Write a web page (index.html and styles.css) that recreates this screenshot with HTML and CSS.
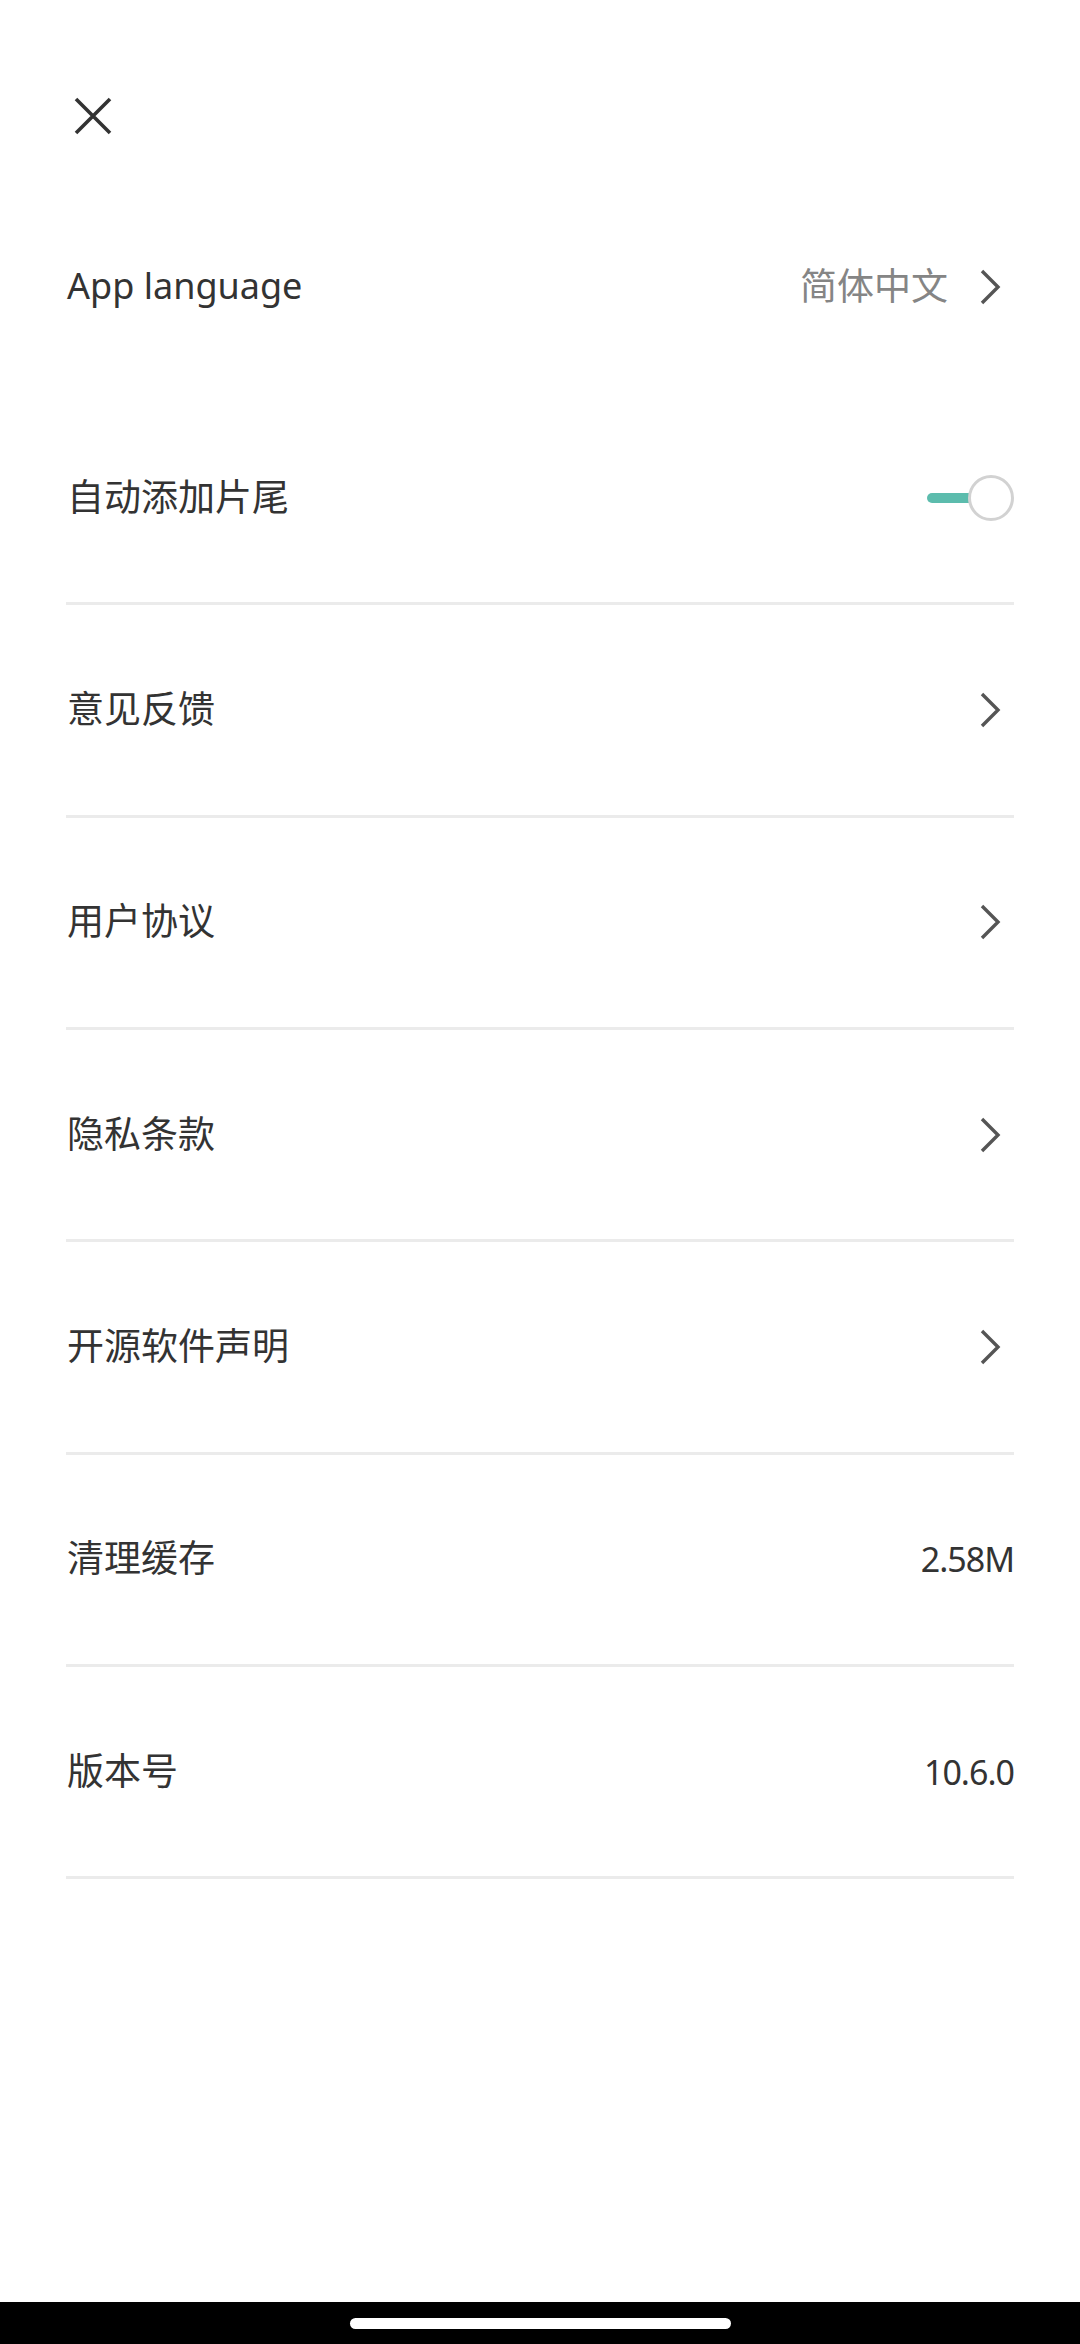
FILE: index.html
```html
<!doctype html>
<html>
<head>
<meta charset="utf-8">
<title>设置</title>
<link rel="stylesheet" href="styles.css">
</head>

<body>
<div class="page">
	<div class="header">
		<svg class="closeIcon" width="38" height="38" viewBox="0 0 38 38">
			<path d="M2 2 L36 36 M36 2 L2 36" stroke="#333" stroke-width="3.6" fill="none"/>
		</svg>
	</div>

	<ul class="settingList">
		<li class="row noLine">
			<span class="label latin">App language</span>
			<span class="right">
				<span class="value grey">简体中文</span>
				<svg class="arrow" width="22" height="36" viewBox="0 0 22 36">
					<path d="M3 2 L19 18 L3 34" stroke="#555" stroke-width="3.4" fill="none"/>
				</svg>
			</span>
		</li>
		<li class="row">
			<span class="label">自动添加片尾</span>
			<span class="switch">
				<span class="track"></span>
				<span class="knob"></span>
			</span>
		</li>
		<li class="row">
			<span class="label">意见反馈</span>
			<svg class="arrow" width="22" height="36" viewBox="0 0 22 36">
				<path d="M3 2 L19 18 L3 34" stroke="#555" stroke-width="3.4" fill="none"/>
			</svg>
		</li>
		<li class="row">
			<span class="label">用户协议</span>
			<svg class="arrow" width="22" height="36" viewBox="0 0 22 36">
				<path d="M3 2 L19 18 L3 34" stroke="#555" stroke-width="3.4" fill="none"/>
			</svg>
		</li>
		<li class="row">
			<span class="label">隐私条款</span>
			<svg class="arrow" width="22" height="36" viewBox="0 0 22 36">
				<path d="M3 2 L19 18 L3 34" stroke="#555" stroke-width="3.4" fill="none"/>
			</svg>
		</li>
		<li class="row">
			<span class="label">开源软件声明</span>
			<svg class="arrow" width="22" height="36" viewBox="0 0 22 36">
				<path d="M3 2 L19 18 L3 34" stroke="#555" stroke-width="3.4" fill="none"/>
			</svg>
		</li>
		<li class="row">
			<span class="label">清理缓存</span>
			<span class="value">2.58M</span>
		</li>
		<li class="row">
			<span class="label">版本号</span>
			<span class="value">10.6.0</span>
		</li>
	</ul>

	<div class="filler"></div>

	<div class="navBar">
		<div class="homePill"></div>
	</div>
</div>
</body>
</html>
```

FILE: styles.css
```css
html, body{
	margin: 0;
	padding: 0;
	background: #ffffff;
}

body{
	font-family: "Noto Sans", "Noto Sans CJK SC", sans-serif;
	color: #333333;
}

.page{
	display: flex;
	flex-direction: column;
	height: 2344px;
}

.header{
	height: 180px;
	box-sizing: border-box;
	padding: 97px 0 0 74px;
}

.closeIcon{
	display: block;
}

.settingList{
	list-style: none;
	margin: 0 66px;
	padding: 0;
}

.row{
	display: flex;
	align-items: center;
	justify-content: space-between;
	height: 212.33px;
	box-sizing: border-box;
	border-bottom: 3px solid #ebebeb;
}

.noLine{
	height: 213px;
	border-bottom: none;
}

.label{
	font-size: 37px;
	padding-left: 1px;
	margin-bottom: 6px;
}

.latin{
	font-size: 36px;
	margin-bottom: 2px;
}

.right{
	display: flex;
	align-items: center;
}

.value{
	font-size: 34px;
	letter-spacing: -1px;
}

.grey{
	font-size: 37px;
	letter-spacing: 0;
	color: #858585;
	margin-right: 31px;
	margin-bottom: 6px;
}

.arrow{
	display: block;
	margin-right: 13px;
}

.switch{
	position: relative;
	width: 87px;
	height: 46px;
}

.track{
	position: absolute;
	left: 0;
	top: 18px;
	width: 60px;
	height: 10px;
	border-radius: 5px;
	background: #5cbcad;
}

.knob{
	position: absolute;
	right: 0;
	top: 0;
	width: 46px;
	height: 46px;
	box-sizing: border-box;
	border-radius: 50%;
	border: 3px solid #d2d2d2;
	background: #ffffff;
}

.filler{
	flex: 1;
}

.navBar{
	height: 42px;
	background: #000000;
	display: flex;
	justify-content: center;
	padding-top: 16px;
	box-sizing: border-box;
}

.homePill{
	width: 381px;
	height: 11px;
	border-radius: 6px;
	background: #ffffff;
}
```
